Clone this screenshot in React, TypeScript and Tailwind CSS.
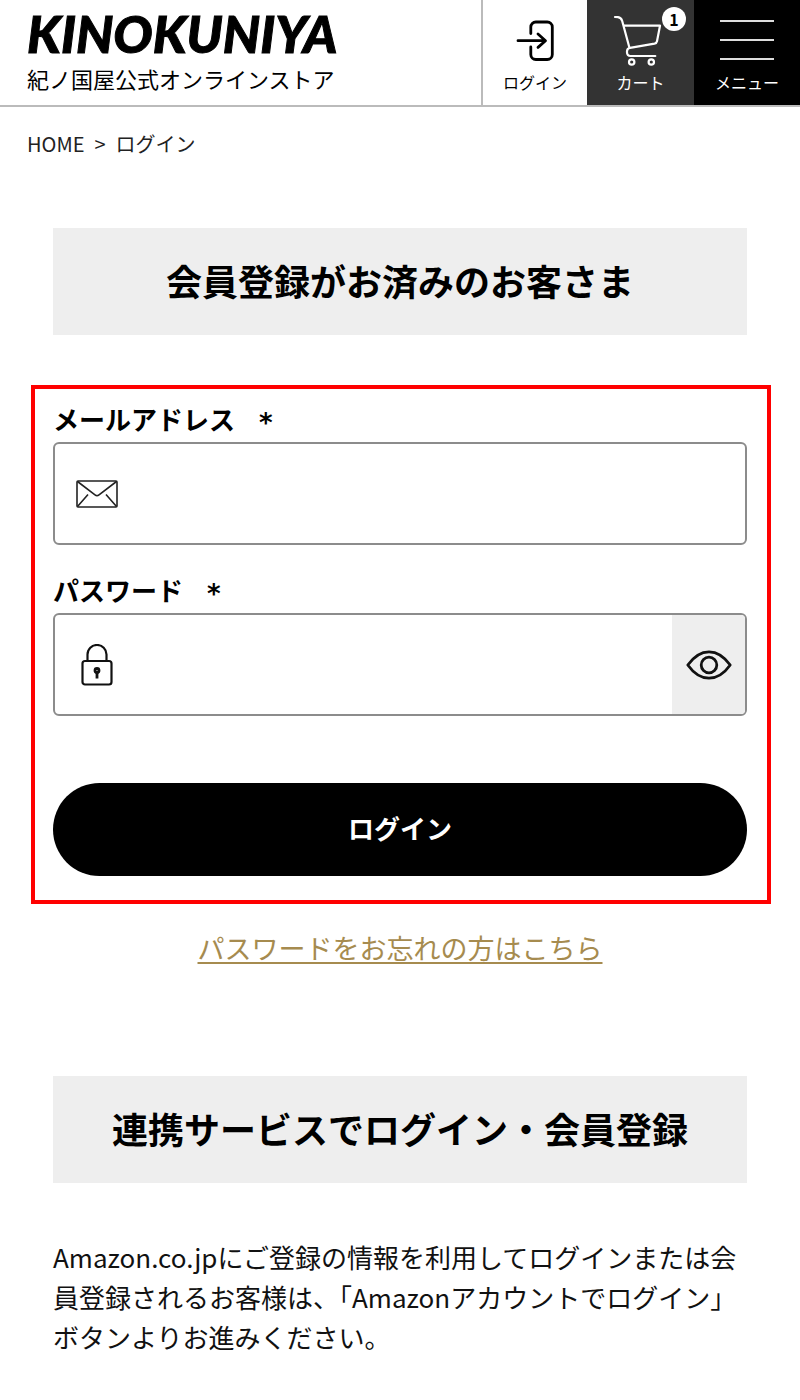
import React, { useState } from 'react';

interface SectionTitleProps {
  children: React.ReactNode;
}

const SectionTitle: React.FC<SectionTitleProps> = ({ children }) => (
  <h2 className="mx-[53px] flex min-h-[107px] items-center justify-center bg-[#eeeeee] px-4 pb-1 text-center text-4xl font-bold">
    {children}
  </h2>
);

interface FieldProps {
  id: string;
  label: string;
  type: string;
  icon: React.ReactNode;
  children?: React.ReactNode;
}

const Field: React.FC<FieldProps> = ({ id, label, type, icon, children }) => (
  <div>
    <label htmlFor={id} className="mb-2 flex h-[30px] items-center gap-6 text-[26px] font-bold leading-[30px]">
      {label}
      <span className="pt-2 font-['DejaVu_Sans']">*</span>
    </label>
    <div className="flex h-[103px] overflow-hidden rounded-md border-2 border-[#8c8c8c]">
      <span className="flex w-[84px] shrink-0 items-center justify-center">{icon}</span>
      <input id={id} name={id} type={type} className="min-w-0 flex-1 text-[26px] outline-none" />
      {children}
    </div>
  </div>
);

const LoginIcon = () => (
  <svg width="38" height="42" viewBox="0 0 38 42" fill="none" stroke="currentColor" strokeWidth="2.8" strokeLinecap="round" strokeLinejoin="round">
    <path d="M14.8 13.5V7a5 5 0 0 1 5-5h11.5a5 5 0 0 1 5 5v27.5a5 5 0 0 1-5 5H19.8a5 5 0 0 1-5-5V27" />
    <path d="M2 20.7h27M22 14l7.5 6.7L22 27.4" />
  </svg>
);

const CartIcon = () => (
  <svg width="56" height="52" viewBox="0 0 56 52" fill="none" stroke="currentColor" strokeWidth="2.2" strokeLinecap="round" strokeLinejoin="round">
    <path d="M2 2l3 .2c2.6.3 3.6 1.6 4.2 3.8L16.500 33" />
    <path d="M11 10.7h36l-3 15.5c-.3 1.5-1 2.1-2.5 2.4L17 32.8c-2 .5-3 1.6-3 3.5v1c0 2.3 1.3 3.7 3.5 3.7h24.8" />
    <circle cx="18.7" cy="47" r="2.7" />
    <circle cx="38.3" cy="47" r="2.7" />
  </svg>
);

const MailIcon = () => (
  <svg width="42" height="28" viewBox="0 0 42 28" fill="none" stroke="#222" strokeWidth="1.6" strokeLinejoin="round">
    <rect x="1" y="1" width="40" height="26" rx="1" />
    <path d="M1.5 1.5l17.5 13.3c1.3 1 2.7 1 4 0L40.500 1.500M1.500 26.500L12 14.500M40.500 26.500L30 14.500" />
  </svg>
);

const LockIcon = () => (
  <svg width="32" height="42" viewBox="0 0 32 42" fill="none" stroke="#111" strokeWidth="2.2">
    <rect x="1.5" y="17" width="29" height="23.5" rx="2.5" />
    <path d="M6.5 17v-6.500a9.500 9.500 0 0 1 19 0V17" />
    <circle cx="16" cy="26.5" r="2" strokeWidth="2.8" />
    <path d="M16 28v6.500" strokeWidth="2.8" />
  </svg>
);

const EyeIcon = () => (
  <svg width="46" height="32" viewBox="0 0 46 32" fill="none" stroke="#111" strokeWidth="2.8" strokeLinejoin="round">
    <path d="M1.8 16C7.500 8 14.500 2.800 23 2.800S38.500 8 44.200 16C38.500 24 31.500 29.200 23 29.200S7.500 24 1.800 16z" />
    <circle cx="23" cy="16" r="7.8" />
  </svg>
);

const Header = () => (
  <header className="flex h-[107px] border-b-2 border-[#bbbbbb]">
    <a href="#" className="flex flex-1 flex-col pl-[27px] pt-1">
      <span className="h-[58px] font-['Lato'] text-[52px] font-black italic leading-[58px] [-webkit-text-stroke:1px_black]">
        KINOKUNIYA
      </span>
      <span className="text-[22px] leading-8">紀ノ国屋公式オンラインストア</span>
    </a>
    <nav className="flex text-base leading-6">
      <a href="#" className="flex w-[106px] flex-col items-center border-l-2 border-[#bbbbbb] pt-5">
        <span className="h-[50px]"><LoginIcon /></span>
        ログイン
      </a>
      <a href="#" className="relative flex w-[107px] flex-col items-center bg-[#333333] pt-[15px] text-white">
        <span className="h-[55px]"><CartIcon /></span>
        カート
        <span className="absolute right-2 top-[7px] flex h-6 w-6 items-center justify-center rounded-full bg-white text-base font-bold text-black">
          1
        </span>
      </a>
      <button type="button" className="flex w-[106px] flex-col items-center bg-black pt-5 text-white">
        <span className="flex h-[50px] w-[54px] flex-col gap-[17px]">
          <span className="h-0.5 bg-[#dddddd]" />
          <span className="h-0.5 bg-[#dddddd]" />
          <span className="h-0.5 bg-[#dddddd]" />
        </span>
        メニュー
      </button>
    </nav>
  </header>
);

const LoginForm = () => {
  const [showPassword, setShowPassword] = useState(false);

  return (
    <form className="ml-[31px] mr-[29px] mt-[50px] border-4 border-[#ff0000] pb-6 pl-[18px] pr-5 pt-[15px]" onSubmit={e => e.preventDefault()}>
      <div className="flex flex-col gap-[30px]">
        <Field id="email" label="メールアドレス" type="email" icon={<MailIcon />} />
        <Field id="password" label="パスワード" type={showPassword ? 'text' : 'password'} icon={<LockIcon />}>
          <button
            type="button"
            aria-label="パスワードを表示"
            onClick={() => setShowPassword(!showPassword)}
            className="flex w-[73px] shrink-0 items-center justify-center bg-[#eeeeee]"
          >
            <EyeIcon />
          </button>
        </Field>
      </div>
      <button type="submit" className="mt-[67px] h-[93px] w-full rounded-full bg-black pb-1 text-[26px] font-bold text-white">
        ログイン
      </button>
    </form>
  );
};

export default function App() {
  return (
    <div lang="ja" className="min-h-screen bg-white font-['Noto_Sans_CJK_JP',sans-serif] text-black">
      <Header />
      <nav className="flex gap-2.5 px-[27px] pt-[21px] text-xl leading-8 text-[#222222]">
        <a href="#">HOME</a>
        <span>&gt;</span>
        <span>ログイン</span>
      </nav>
      <main className="pt-[68px]">
        <SectionTitle>会員登録がお済みのお客さま</SectionTitle>
        <LoginForm />
        <p className="mt-6 text-center text-[27px] leading-10">
          <a href="#" className="text-[#a68b4f] underline decoration-2 underline-offset-3">
            パスワードをお忘れの方はこちら
          </a>
        </p>
        <div className="mt-[108px]">
          <SectionTitle>連携サービスでログイン・会員登録</SectionTitle>
        </div>
        <p className="mx-[53px] mt-[54px] text-[26px] leading-10 text-[#111111]">
          Amazon.co.jpにご登録の情報を利用してログインまたは会員登録されるお客様は、「Amazonアカウントでログイン」ボタンよりお進みください。
        </p>
      </main>
    </div>
  );
}
